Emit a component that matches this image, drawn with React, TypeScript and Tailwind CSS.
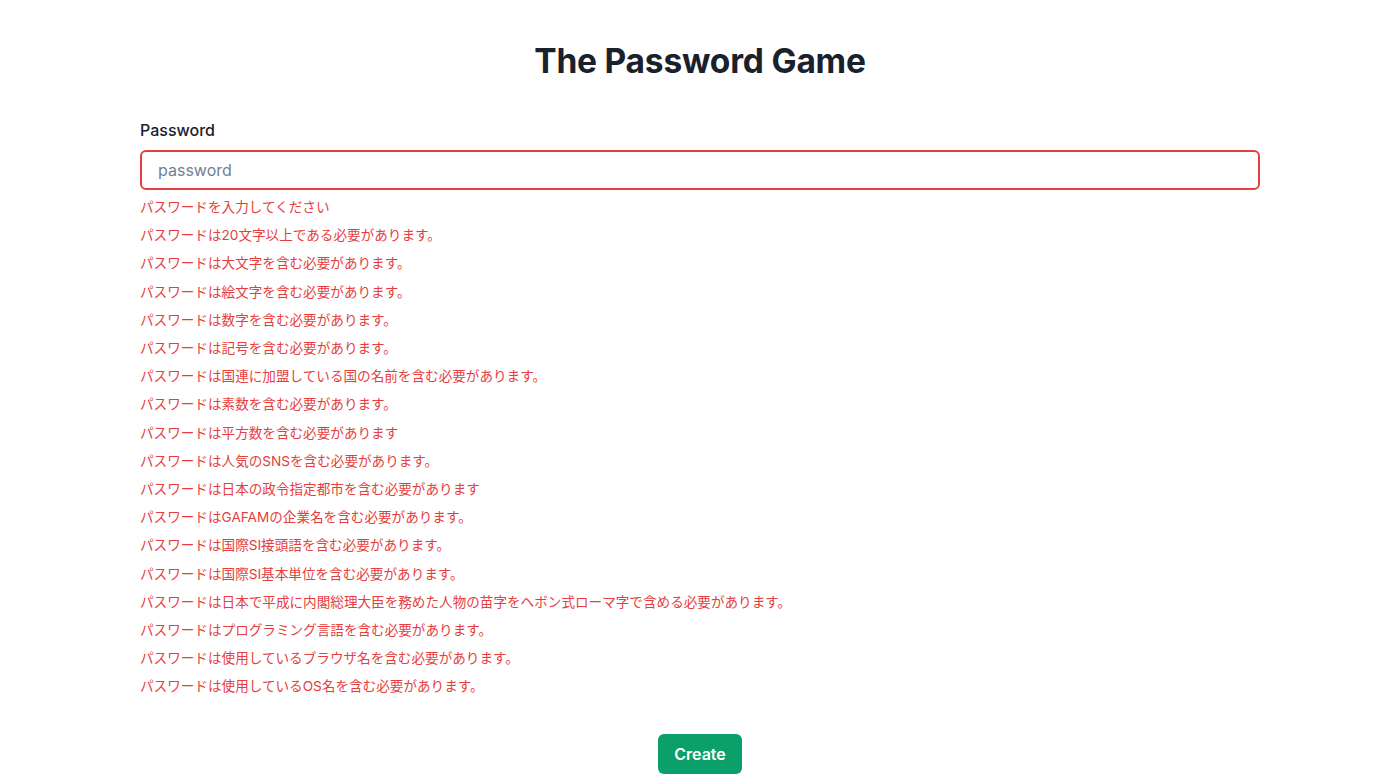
import React from "react"

const errors = [
  "パスワードを入力してください",
  "パスワードは20文字以上である必要があります。",
  "パスワードは大文字を含む必要があります。",
  "パスワードは絵文字を含む必要があります。",
  "パスワードは数字を含む必要があります。",
  "パスワードは記号を含む必要があります。",
  "パスワードは国連に加盟している国の名前を含む必要があります。",
  "パスワードは素数を含む必要があります。",
  "パスワードは平方数を含む必要があります",
  "パスワードは人気のSNSを含む必要があります。",
  "パスワードは日本の政令指定都市を含む必要があります",
  "パスワードはGAFAMの企業名を含む必要があります。",
  "パスワードは国際SI接頭語を含む必要があります。",
  "パスワードは国際SI基本単位を含む必要があります。",
  "パスワードは日本で平成に内閣総理大臣を務めた人物の苗字をヘボン式ローマ字で含める必要があります。",
  "パスワードはプログラミング言語を含む必要があります。",
  "パスワードは使用しているブラウザ名を含む必要があります。",
  "パスワードは使用しているOS名を含む必要があります。",
]

export default function App() {
  return (
    <div className="min-h-screen bg-white font-['Inter','Noto_Sans_CJK_JP',sans-serif] text-[#1A202C]">
      <div className="mx-auto flex w-[1120px] flex-col pt-[40px]">
        <h1 className="text-center text-[33.5px] font-bold leading-[43px] tracking-[-0.2px]">The Password Game</h1>

        <div className="mt-[35px] flex flex-col">
          <label className="mb-2 text-[16px] font-medium leading-6">Password</label>
          <input
            type="password"
            placeholder="password"
            className="h-[40px] w-full rounded-md border-2 border-[#E53E3E] px-4 text-[16px] outline-none placeholder:text-[#718096]"
          />
          <div className="flex flex-col">
            {errors.map((e) => (
              <p key={e} className="mt-2 text-[13.6px] leading-[20.2px] text-[#E53E3E] first:mt-[7px]">
                {e}
              </p>
            ))}
          </div>
        </div>

        <div className="mt-[37px] flex justify-center">
          <button
            type="button"
            className="h-10 rounded-md bg-[#0BA06A] px-4 text-[16px] font-semibold text-white"
          >
            Create
          </button>
        </div>
      </div>
    </div>
  )
}
